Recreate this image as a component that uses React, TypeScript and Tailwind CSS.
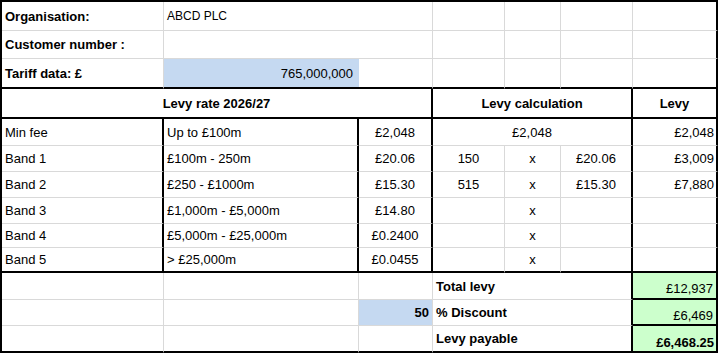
import type { ReactNode } from "react"

// light Excel gridline + thick cell borders
const G = "#d9d9d9"

type CellProps = {
  children?: ReactNode
  className?: string
}

function Cell({ children, className = "" }: CellProps) {
  return <div className={`flex items-center overflow-hidden whitespace-nowrap px-[3px] ${className}`}>{children}</div>
}

const grayRB = "border-r border-b border-r-[#d9d9d9] border-b-[#d9d9d9]"

const bands = [
  { name: "Band 1", range: "£100m - 250m", rate: "£20.06", units: "150", calcRate: "£20.06", levy: "£3,009" },
  { name: "Band 2", range: "£250 - £1000m", rate: "£15.30", units: "515", calcRate: "£15.30", levy: "£7,880" },
  { name: "Band 3", range: "£1,000m - £5,000m", rate: "£14.80", units: "", calcRate: "", levy: "" },
  { name: "Band 4", range: "£5,000m - £25,000m", rate: "£0.2400", units: "", calcRate: "", levy: "" },
  { name: "Band 5", range: "> £25,000m", rate: "£0.0455", units: "", calcRate: "", levy: "" },
]

export default function App() {
  return (
    <div className="min-h-[355px] w-[720px] bg-white font-['Liberation_Sans',Arial,sans-serif] text-[13px] leading-[15px] text-black">
      <div className="grid w-fit grid-cols-[162px_195px_74px_72px_56px_72px_85px] grid-rows-[29px_28px_30px_30px_27px_26px_26px_26px_24px_25px_27px_26px_27px] border-l-2 border-t-2 border-black">
        {/* customer details */}
        <Cell className={`${grayRB} font-bold`}>Organisation:</Cell>
        <Cell className="border-b border-b-[#d9d9d9] text-[12px]">ABCD PLC</Cell>
        <Cell className={grayRB} />
        <Cell className={grayRB} />
        <Cell className={grayRB} />
        <Cell className={grayRB} />
        <Cell className="border-r-2 border-b border-r-black border-b-[#d9d9d9]" />

        <Cell className={`${grayRB} font-bold`}>Customer number :</Cell>
        <Cell className="border-b border-b-[#d9d9d9]" />
        <Cell className={grayRB} />
        <Cell className={grayRB} />
        <Cell className={grayRB} />
        <Cell className={grayRB} />
        <Cell className="border-r-2 border-b border-r-black border-b-[#d9d9d9]" />

        <Cell className="border-r border-b-2 border-r-[#d9d9d9] border-b-black font-bold">Tariff data: £</Cell>
        <Cell className="justify-end border-b-2 border-b-black bg-[#c5d9f1] pr-[6px]">765,000,000</Cell>
        <Cell className="border-r border-b-2 border-r-[#d9d9d9] border-b-black" />
        <Cell className="border-r border-b-2 border-r-[#d9d9d9] border-b-black" />
        <Cell className="border-r border-b-2 border-r-[#d9d9d9] border-b-black" />
        <Cell className="border-r border-b-2 border-r-[#d9d9d9] border-b-black" />
        <Cell className="border-r-2 border-b-2 border-black" />

        {/* headers */}
        <Cell className="col-span-3 justify-center border-r-2 border-b-2 border-black font-bold">Levy rate 2026/27</Cell>
        <Cell className="col-span-3 justify-center border-r-2 border-b-2 border-black font-bold">Levy calculation</Cell>
        <Cell className="justify-center border-r-2 border-b-2 border-black font-bold">Levy</Cell>

        {/* min fee */}
        <Cell className="border-r-2 border-b border-r-black border-b-[#d9d9d9]">Min fee</Cell>
        <Cell className="border-r-2 border-b border-r-black border-b-[#d9d9d9]">Up to £100m</Cell>
        <Cell className="justify-center border-r-2 border-b border-r-black border-b-[#d9d9d9]">£2,048</Cell>
        <Cell className="col-span-3 justify-center border-r-2 border-b border-r-black border-b-[#d9d9d9]">£2,048</Cell>
        <Cell className="justify-end border-r-2 border-b border-r-black border-b-[#d9d9d9] pr-[2px]">£2,048</Cell>

        {bands.map((b, i) => {
          const bottom = i === bands.length - 1 ? "border-b-2 border-b-black" : "border-b border-b-[#d9d9d9]"
          return (
            <div key={b.name} className="contents">
              <Cell className={`border-r-2 border-r-black ${bottom}`}>{b.name}</Cell>
              <Cell className={`border-r-2 border-r-black ${bottom}`}>{b.range}</Cell>
              <Cell className={`justify-center border-r-2 border-r-black ${bottom}`}>{b.rate}</Cell>
              <Cell className={`justify-center border-r border-r-[#d9d9d9] ${bottom}`}>{b.units}</Cell>
              <Cell className={`justify-center border-r border-r-[#d9d9d9] ${bottom}`}>x</Cell>
              <Cell className={`justify-center border-r-2 border-r-black ${bottom}`}>{b.calcRate}</Cell>
              <Cell className={`justify-end border-r-2 border-r-black pr-[2px] ${bottom}`}>{b.levy}</Cell>
            </div>
          )
        })}

        {/* totals */}
        <Cell className={grayRB} />
        <Cell className={grayRB} />
        <Cell className={grayRB} />
        <Cell className="col-span-3 border-r-2 border-b border-r-black border-b-[#d9d9d9] font-bold">Total levy</Cell>
        <Cell className="items-end justify-end border-r-2 border-b-2 border-black bg-[#ccffcc] pb-[2px]">£12,937</Cell>

        <Cell className={grayRB} />
        <Cell className={grayRB} />
        <Cell className={`${grayRB} justify-end bg-[#c5d9f1] font-bold`}>50</Cell>
        <Cell className="col-span-3 border-r-2 border-b border-r-black border-b-[#d9d9d9] px-[2px] font-bold">% Discount</Cell>
        <Cell className="items-end justify-end border-r-2 border-b-2 border-black bg-[#ccffcc] pb-[1px]">£6,469</Cell>

        <Cell className="border-r border-b-2 border-r-[#d9d9d9] border-b-black" />
        <Cell className="border-r border-b-2 border-r-[#d9d9d9] border-b-black" />
        <Cell className="border-r border-b-2 border-r-[#d9d9d9] border-b-black" />
        <Cell className="col-span-3 border-r-2 border-b-2 border-black font-bold">Levy payable</Cell>
        <Cell className="items-end justify-end border-r-2 border-b-2 border-black bg-[#ccffcc] pr-[2px] pb-[1px] font-bold">£6,468.25</Cell>
      </div>
    </div>
  )
}
